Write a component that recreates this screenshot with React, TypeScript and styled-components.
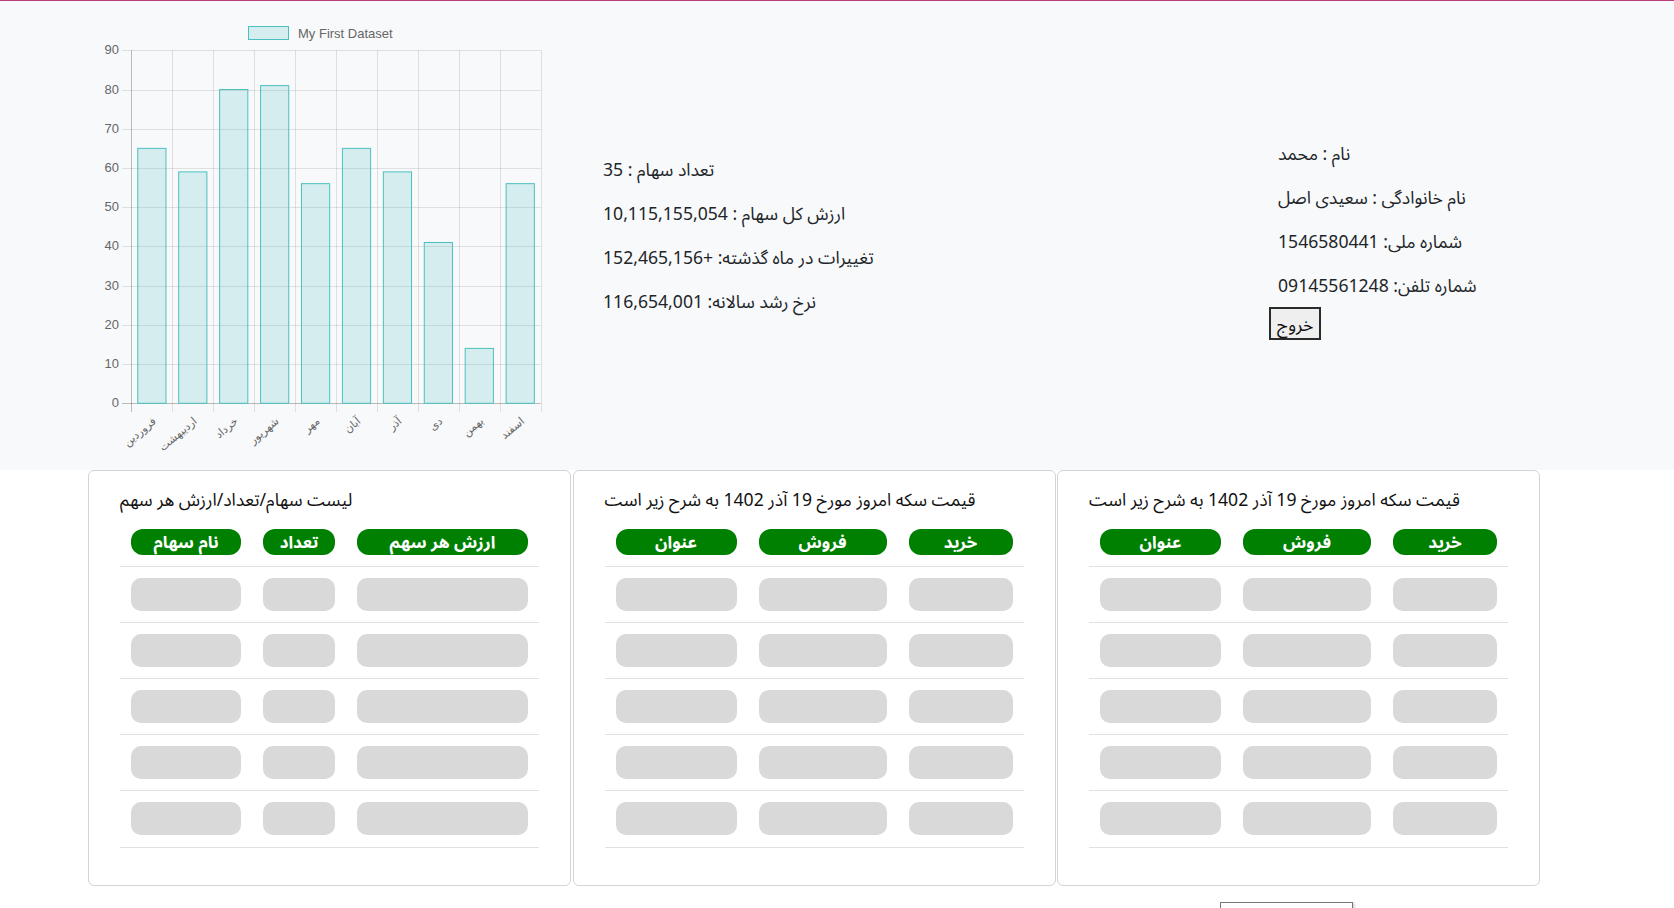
import React from 'react';
import styled, { createGlobalStyle } from 'styled-components';

const GlobalStyle = createGlobalStyle`
  html, body { margin: 0; padding: 0; background: #ffffff; }
  body {
    font-family: "Noto Sans", "Noto Sans Arabic", "DejaVu Sans", sans-serif;
    color: #212529;
  }
  * { box-sizing: border-box; }
`;

const Page = styled.div`
  width: 1674px;
`;

const Top = styled.section`
  background: #f8f9fa;
  border-top: 1px solid #b83d78;
  height: 470px;
  display: grid;
  grid-template-columns: 560px 556px 1fr;
`;

const ChartCol = styled.div`
  width: 560px;
  height: 469px;
`;

const StatsCol = styled.div`
  padding: 155px 0 0 43px;
  display: flex;
  flex-direction: column;
  gap: 17.6px;
`;

const ProfileCol = styled.div`
  padding: 139px 0 0 153px;
  display: flex;
  flex-direction: column;
  align-items: flex-start;
`;

const InfoList = styled.div`
  display: flex;
  flex-direction: column;
  gap: 17.6px;
  margin-left: 9px;
`;

const Line = styled.p`
  margin: 0;
  font-size: 17.6px;
  line-height: 26.4px;
  direction: rtl;
  text-align: left;
  white-space: nowrap;
  color: #212529;
`;

const ExitButton = styled.button`
  margin-top: 9px;
  height: 33px;
  padding: 0 6px;
  font-family: inherit;
  font-size: 17.6px;
  line-height: 26px;
  color: #111;
  background: #efefef;
  border: 2px solid #2b2b2b;
  border-radius: 0;
`;

const Cards = styled.div`
  display: grid;
  grid-template-columns: repeat(3, 483px);
  column-gap: 1.5px;
  padding-left: 88px;
`;

const Card = styled.div`
  border: 1px solid #d4d4d4;
  border-radius: 6px;
  padding: 18px 31px 37px 31px;
  background: #ffffff;
`;

const CardTitle = styled.h3`
  margin: 0 0 8px;
  font-size: 17.6px;
  font-weight: 400;
  line-height: 21px;
  direction: rtl;
  text-align: left;
  white-space: nowrap;
  color: #111;
`;

const Row = styled.div<{ $cols: string }>`
  display: grid;
  grid-template-columns: ${p => p.$cols};
  border-bottom: 1px solid #dee2e6;
`;

const Cell = styled.div`
  padding: 11px 11px 11.1px;
`;

const HeadPill = styled.div`
  height: 26px;
  border-radius: 12px;
  background: #008000;
  color: #ffffff;
  font-weight: 700;
  font-size: 17px;
  line-height: 26px;
  text-align: center;
  white-space: nowrap;
`;

const SkeletonPill = styled.div`
  height: 33px;
  border-radius: 10px;
  background: #d9d9d9;
`;

const Footer = styled.div`
  margin-top: 16px;
  padding-left: 1220px;
`;

const FeatureBox = styled.div`
  width: 133px;
  height: 30px;
  border: 1px solid #767676;
  font-family: "Liberation Sans", Arial, sans-serif;
  font-size: 13px;
  line-height: 22px;
  padding: 3px 6px;
  color: #222;
  background: #fff;
  box-shadow: 2px 1px 2px rgba(0,0,0,0.15);
`;

const labels = ['فروردین', 'اردیبهشت', 'خرداد', 'شهریور', 'مهر', 'آبان', 'آذر', 'دی', 'بهمن', 'اسفند'];
const values = [65, 59, 80, 81, 56, 65, 59, 41, 14, 56];

const BarChart: React.FC = () => {
  const left = 131.4;
  const right = 540.7;
  const zeroY = 402.3;
  const topY = 49.3;
  const unit = (zeroY - topY) / 90;
  const cat = (right - left) / 10;
  const barW = 28.2;
  const ticks = [0, 10, 20, 30, 40, 50, 60, 70, 80, 90];
  return (
    <svg width="560" height="469" viewBox="0 0 560 469">
      <rect x="248.5" y="25.5" width="40" height="13" fill="rgba(75,192,192,0.2)" stroke="rgb(75,192,192)" strokeWidth="1" />
      <text x="298" y="36.5" fontFamily="Liberation Sans, Arial, sans-serif" fontSize="13" fill="#666">My First Dataset</text>
      {ticks.map(t => {
        const y = Math.round(zeroY - t * unit) + 0.5;
        return (
          <g key={t}>
            <line x1="122" x2={right} y1={y} y2={y} stroke={t === 0 ? 'rgba(0,0,0,0.25)' : 'rgba(0,0,0,0.1)'} strokeWidth="1" />
            <text x="119" y={y} textAnchor="end" dominantBaseline="middle" fontFamily="Liberation Sans, Arial, sans-serif" fontSize="13" fill="#666">{t}</text>
          </g>
        );
      })}
      {Array.from({ length: 11 }).map((_, i) => {
        const x = Math.round(left + i * cat) + 0.5;
        return (
          <line key={i} x1={x} x2={x} y1={topY} y2={411} stroke={i === 0 ? 'rgba(0,0,0,0.25)' : 'rgba(0,0,0,0.1)'} strokeWidth="1" />
        );
      })}
      {values.map((v, i) => {
        const cx = left + (i + 0.5) * cat;
        const y = zeroY - v * unit;
        return (
          <rect key={i} x={cx - barW / 2} y={y} width={barW} height={zeroY - y} fill="rgba(75,192,192,0.2)" stroke="rgb(75,192,192)" strokeWidth="1" />
        );
      })}
      {labels.map((l, i) => {
        const cx = left + (i + 0.5) * cat + 3;
        return (
          <text key={l} transform={`translate(${cx} 419) rotate(-40)`} textAnchor="end" dominantBaseline="middle" fontFamily="DejaVu Sans, sans-serif" fontSize="11" fill="#666">{l}</text>
        );
      })}
    </svg>
  );
};

type TableCardProps = {
  title: string;
  heads: string[];
  cols: string;
};

const TableCard: React.FC<TableCardProps> = ({ title, heads, cols }) => (
  <Card>
    <CardTitle>{title}</CardTitle>
    <Row $cols={cols}>
      {heads.map(h => (
        <Cell key={h}><HeadPill>{h}</HeadPill></Cell>
      ))}
    </Row>
    {[0, 1, 2, 3, 4].map(r => (
      <Row key={r} $cols={cols}>
        {heads.map(h => (
          <Cell key={h}><SkeletonPill /></Cell>
        ))}
      </Row>
    ))}
  </Card>
);

export default function App() {
  return (
    <Page>
      <GlobalStyle />
      <Top>
        <ChartCol>
          <BarChart />
        </ChartCol>
        <StatsCol>
          <Line>تعداد سهام : 35</Line>
          <Line>ارزش کل سهام : 10,115,155,054</Line>
          <Line>تغییرات در ماه گذشته: +152,465,156</Line>
          <Line>نرخ رشد سالانه: 116,654,001</Line>
        </StatsCol>
        <ProfileCol>
          <InfoList>
            <Line>نام : محمد</Line>
            <Line>نام خانوادگی : سعیدی اصل</Line>
            <Line>شماره ملی: 1546580441</Line>
            <Line>شماره تلفن: 09145561248</Line>
          </InfoList>
          <ExitButton>خروج</ExitButton>
        </ProfileCol>
      </Top>
      <Cards>
        <TableCard title="لیست سهام/تعداد/ارزش هر سهم" heads={['نام سهام', 'تعداد', 'ارزش هر سهم']} cols="132px 94px 1fr" />
        <TableCard title="قیمت سکه امروز مورخ 19 آذر 1402 به شرح زیر است" heads={['عنوان', 'فروش', 'خرید']} cols="143px 150px 1fr" />
        <TableCard title="قیمت سکه امروز مورخ 19 آذر 1402 به شرح زیر است" heads={['عنوان', 'فروش', 'خرید']} cols="143px 150px 1fr" />
      </Cards>
      <Footer>
        <FeatureBox>Personal Features</FeatureBox>
      </Footer>
    </Page>
  );
}
